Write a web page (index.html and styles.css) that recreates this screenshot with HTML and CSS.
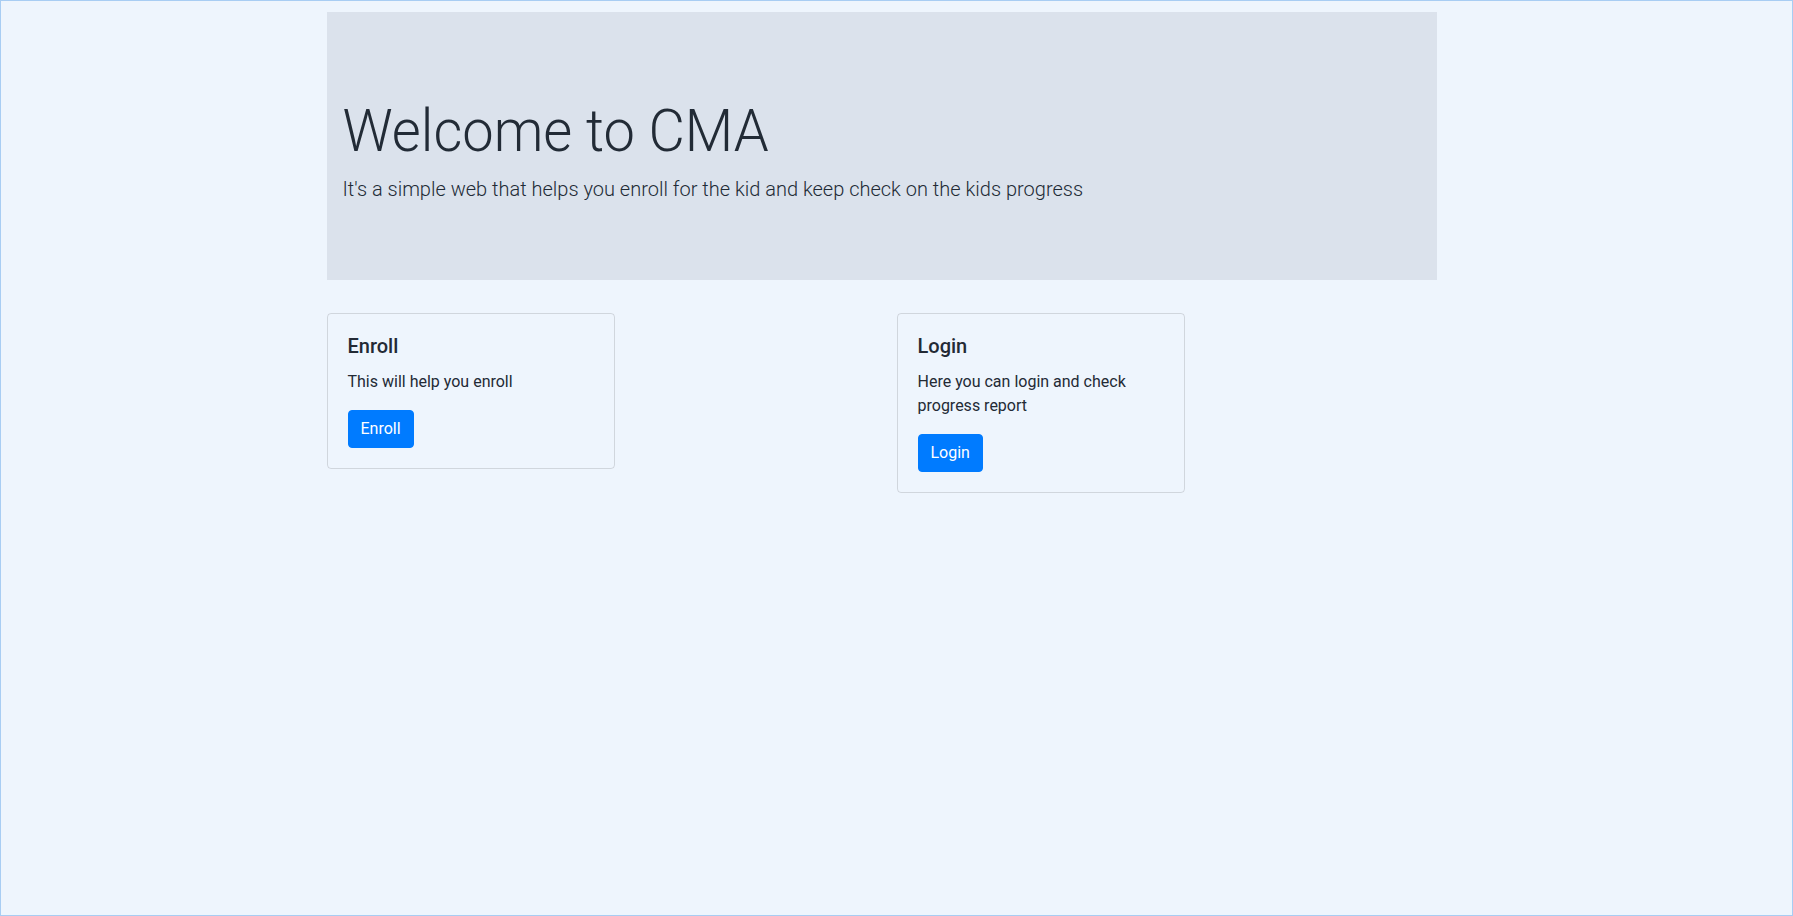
FILE: index.html
```html
<!DOCTYPE html>
<html lang="en">
<head>
<meta charset="utf-8">
<title>CMA</title>
<link rel="stylesheet" href="styles.css">
</head>
<body>
<div class="page">
  <section class="jumbotron">
    <h1 class="display">Welcome to CMA</h1>
    <p class="lead">It's a simple web that helps you enroll for the kid and keep check on the kids progress</p>
  </section>
  <div class="row">
    <div class="col">
      <div class="card">
        <h5 class="card-title">Enroll</h5>
        <p class="card-text">This will help you enroll</p>
        <a class="btn" href="#">Enroll</a>
      </div>
    </div>
    <div class="col">
      <div class="card">
        <h5 class="card-title">Login</h5>
        <p class="card-text">Here you can login and check progress report</p>
        <a class="btn" href="#">Login</a>
      </div>
    </div>
  </div>
</div>
</body>
</html>
```
FILE: styles.css
```css
html, body {
  margin: 0;
  padding: 0;
}
body {
  box-sizing: border-box;
  min-height: 100vh;
  border: 1px solid #a8cdf3;
  background: #eef5fd;
  font-family: Roboto, "Liberation Sans", Arial, sans-serif;
  font-size: 16px;
  line-height: 1.5;
  color: #232a35;
}
.page {
  width: 1140px;
  margin: 0 auto;
  padding-top: 11px;
}
.jumbotron {
  width: 1110px;
  box-sizing: border-box;
  background: #dbe2ec;
  padding: 87px 16px 60px;
  margin-bottom: 33px;
}
.display {
  margin: 0 0 8px;
  font-size: 56px;
  font-weight: 300;
  line-height: 1.2;
  color: #222b36;
  transform: scaleY(1.06);
  transform-origin: 0 80%;
}
.lead {
  margin: 0 0 16px;
  font-size: 20px;
  font-weight: 300;
  line-height: 30px;
  color: #222b36;
}
.row {
  display: grid;
  grid-template-columns: 570px 570px;
}
.card {
  width: 288px;
  box-sizing: border-box;
  border: 1px solid rgba(0, 0, 0, 0.125);
  border-radius: 4px;
  padding: 20px;
}
.card-title {
  margin: 0 0 12px;
  font-size: 20px;
  font-weight: 500;
  line-height: 1.2;
}
.card-text {
  margin: 0 0 16px;
}
.btn {
  display: inline-block;
  padding: 6px 12px;
  border: 1px solid #007bff;
  border-radius: 4px;
  background: #007bff;
  color: #fff;
  text-decoration: none;
  font-size: 16px;
  line-height: 24px;
}
```
